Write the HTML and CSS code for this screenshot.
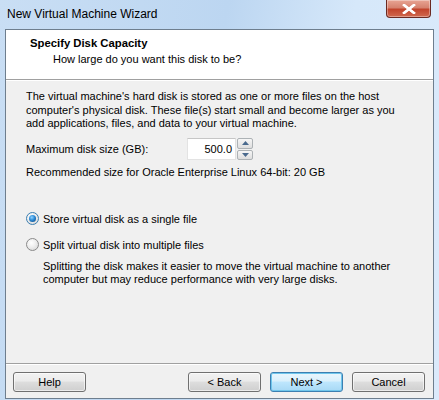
FILE: index.html
```html
<!DOCTYPE html>
<html>
<head>
<meta charset="utf-8">
<link rel="stylesheet" href="styles.css">
</head>
<body>
<div class="window">
  <div class="titlebar">
    <span class="title">New Virtual Machine Wizard</span>
    <div class="close"><svg width="14" height="10" viewBox="0 0 14 10"><path d="M2 1 L12 9 M12 1 L2 9" stroke="#fff" stroke-width="2.6" stroke-linecap="square"/><path d="M2 1 L12 9 M12 1 L2 9" stroke="#fff" stroke-width="2" fill="none"/></svg></div>
  </div>
  <div class="client">
    <div class="header">
      <div class="h-title">Specify Disk Capacity</div>
      <div class="h-sub">How large do you want this disk to be?</div>
    </div>
    <div class="body">
      <p class="intro">The virtual machine's hard disk is stored as one or more files on the host<br>computer's physical disk. These file(s) start small and become larger as you<br>add applications, files, and data to your virtual machine.</p>
      <div class="size-row">
        <span class="lbl">Maximum disk size (GB):</span>
        <div class="input">500.0</div>
        <div class="spin">
          <div class="sb"><svg width="7" height="4" viewBox="0 0 7 4"><path d="M0 4 L3.5 0 L7 4Z" fill="#4a6a8e"/></svg></div>
          <div class="sb"><svg width="7" height="4" viewBox="0 0 7 4"><path d="M0 0 L3.5 4 L7 0Z" fill="#4a6a8e"/></svg></div>
        </div>
      </div>
      <p class="rec">Recommended size for Oracle Enterprise Linux 64-bit: 20 GB</p>
      <div class="radio-row first"><span class="radio on"><span class="dot"></span></span><span>Store virtual disk as a single file</span></div>
      <div class="radio-row"><span class="radio"></span><span>Split virtual disk into multiple files</span></div>
      <p class="desc">Splitting the disk makes it easier to move the virtual machine to another<br>computer but may reduce performance with very large disks.</p>
    </div>
    <div class="footer">
      <button class="btn">Help</button>
      <div class="spacer"></div>
      <button class="btn">&lt; Back</button>
      <button class="btn default">Next &gt;</button>
      <button class="btn">Cancel</button>
    </div>
  </div>
</div>
</body>
</html>
```

FILE: styles.css
```css
html, body { margin: 0; padding: 0; }
body {
  width: 439px; height: 400px; overflow: hidden;
  background: #cfe2f6;
  font-family: "Liberation Sans", Arial, sans-serif;
}
.window {
  width: 439px; height: 400px;
  display: flex; flex-direction: column;
  background: linear-gradient(100deg, #c9def4 0%, #bcd6f1 45%, #d6e8fa 70%, #dbeafb 100%);
}
.titlebar {
  height: 29px; flex: none;
  display: flex; align-items: flex-start;
  position: relative;
}
.title {
  font-family: "Liberation Sans", Arial, sans-serif;
  font-size: 12px; color: #000;
  margin: 7px 0 0 7px;
}
.close {
  position: absolute; left: 386px; top: 0;
  width: 45px; height: 18px;
  box-sizing: border-box;
  border: 1px solid #6b2a22; border-top: none;
  border-radius: 0 0 4px 4px;
  background: linear-gradient(#e8a594 0%, #d6826f 45%, #c2442c 55%, #d0694f 100%);
  display: flex; align-items: center; justify-content: center;
  box-shadow: inset 0 0 0 1px rgba(255,255,255,0.35);
}
.client {
  flex: 1;
  margin: 0 5px 1px 5px;
  border: 1px solid #6e7e8e;
  background: #f0f0f0;
  display: flex; flex-direction: column;
  font-size: 11px; color: #000;
}
.header {
  background: #fff;
  height: 50px; flex: none;
  border-bottom: 1px solid #a0a0a0;
  box-sizing: border-box;
  padding: 6px 0 0 24px;
}
.h-title { font-weight: bold; font-size: 11.3px; line-height: 14px; }
.h-sub { padding-left: 23px; line-height: 14px; margin-top: 2px; }
.body {
  flex: 1;
  border-top: 1px solid #fff;
  padding: 9px 0 0 20px;
}
.intro { margin: 0; line-height: 13.5px; }
.size-row {
  display: flex; align-items: center;
  margin-top: 7px; height: 23px;
}
.lbl { width: 161px; }
.input {
  width: 49px; height: 22px; box-sizing: border-box;
  background: #fff;
  border: 1px solid #e3e3e3;
  border-top-color: #c6c6c6;
  text-align: right; padding-right: 3px;
  line-height: 20px;
}
.spin {
  width: 16px; height: 22px; margin-left: 1px;
  display: flex; flex-direction: column; gap: 1px;
}
.sb {
  flex: 1; box-sizing: border-box;
  border: 1px solid #adb2b5; border-radius: 2px;
  background: linear-gradient(#f6f6f6, #dedede);
  display: flex; align-items: center; justify-content: center;
}
.rec { margin: 4px 0 0 0; line-height: 14px; }
.radio-row {
  display: flex; align-items: center; gap: 4px;
  height: 14px; margin-top: 12px; margin-left: 0;
}
.radio-row.first { margin-top: 33px; }
.radio {
  width: 13px; height: 13px; box-sizing: border-box;
  border-radius: 50%;
  border: 1px solid #8a8a8a;
  background: radial-gradient(circle at 40% 35%, #ffffff 0%, #f0f0f0 40%, #d2d2d2 100%);
  display: flex; align-items: center; justify-content: center;
}
.radio.on { border-color: #3c7fb1; }
.dot {
  width: 7px; height: 7px; border-radius: 50%;
  background: radial-gradient(circle at 40% 35%, #8fd3ff 0%, #2c8ad6 45%, #0b3c6e 100%);
}
.desc { margin: 8px 0 0 17px; line-height: 13.5px; }
.footer {
  height: 34px; flex: none;
  border-top: 1px solid #a0a0a0;
  box-shadow: inset 0 1px 0 #fff;
  display: flex; align-items: center;
  padding: 0 8px 0 7px;
  gap: 9px;
}
.spacer { flex: 1; }
.btn {
  width: 73px; height: 20px;
  font-family: "Liberation Sans", Arial, sans-serif;
  font-size: 11px; color: #000;
  border: 1px solid #707070; border-radius: 3px;
  background: linear-gradient(#f2f2f2 0%, #ebebeb 45%, #dddddd 50%, #cfcfcf 100%);
  box-shadow: inset 0 0 0 1px rgba(255,255,255,0.6);
  padding: 0; margin-top: 2px;
}
.btn.default {
  border-color: #3c7fb1;
  box-shadow: inset 0 0 0 1px #6fc6ec;
  background: linear-gradient(#eaf6fd 0%, #d9f0fc 45%, #bee6fd 50%, #a7d9f5 100%);
}
```
